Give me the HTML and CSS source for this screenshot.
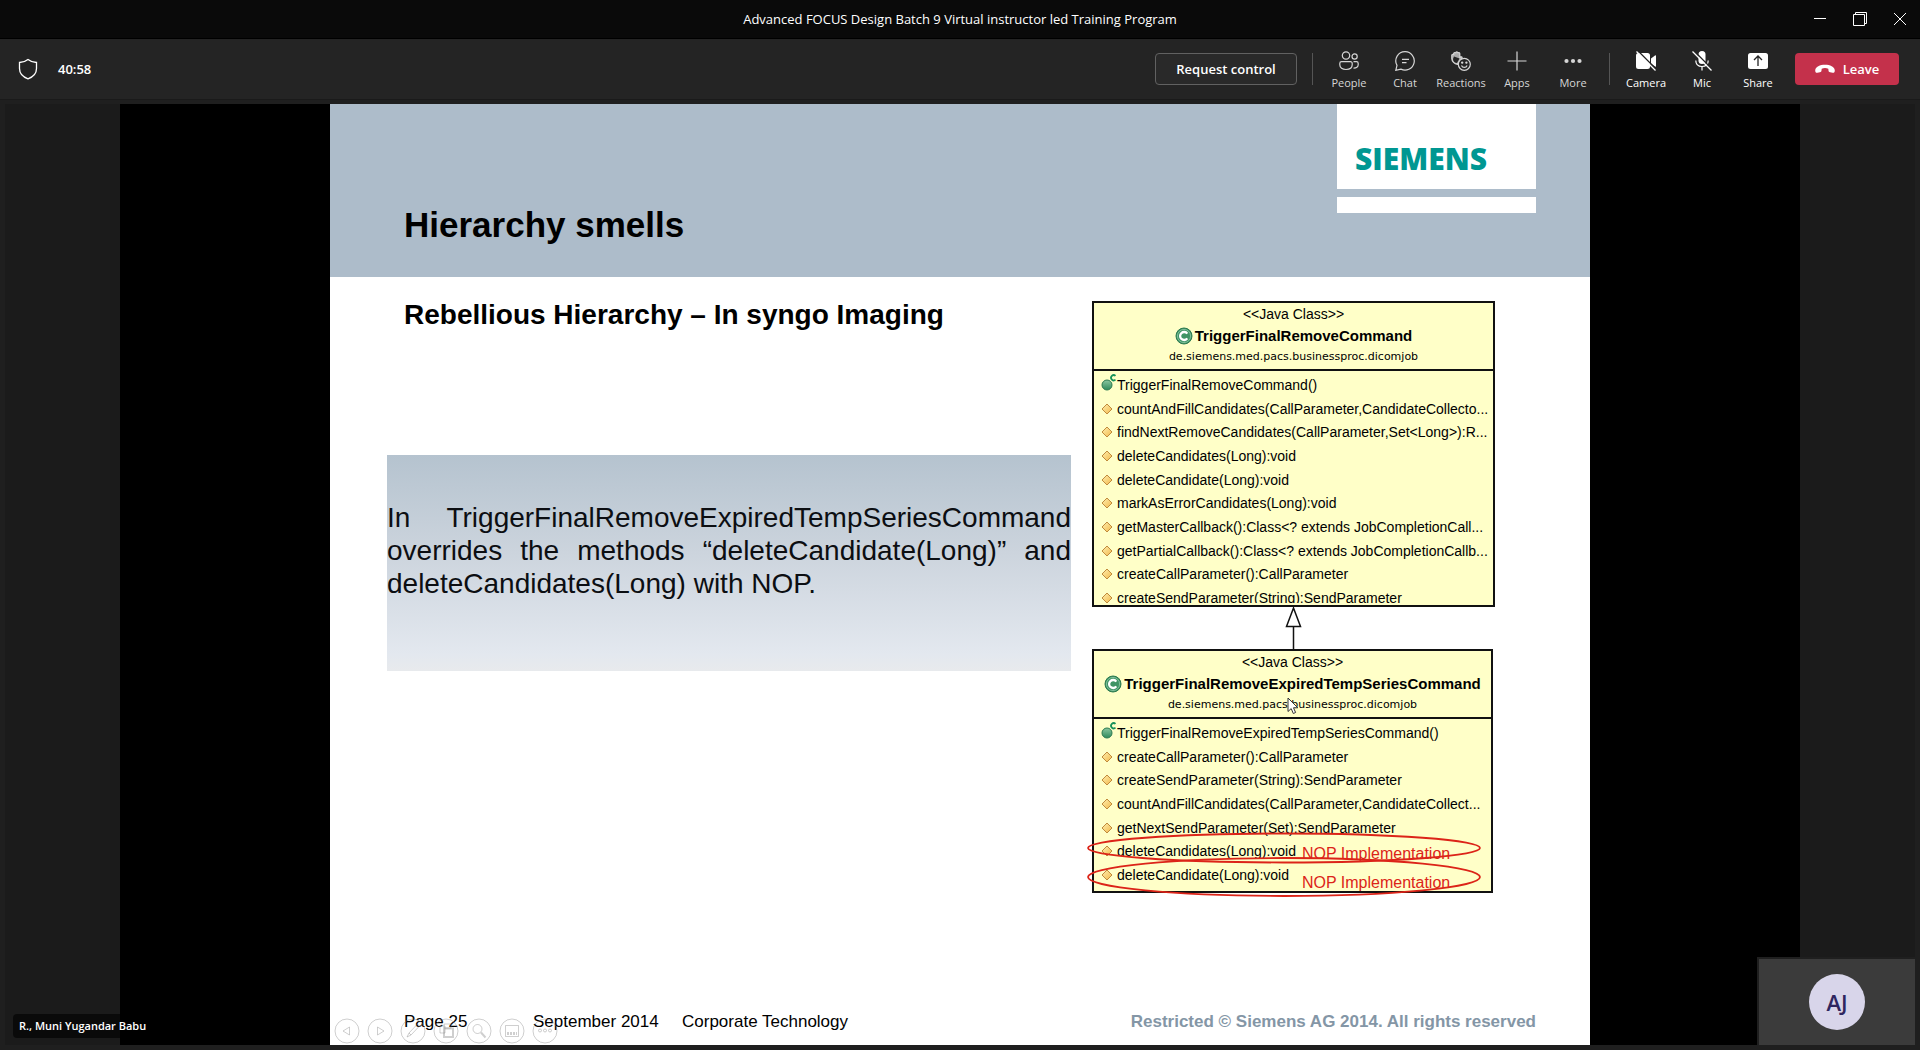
FILE: index.html
```html
<!DOCTYPE html>
<html lang="en">
<head>
<meta charset="utf-8">
<meta name="viewport" content="width=device-width, initial-scale=1">
<title>Advanced FOCUS Design Batch 9 Virtual instructor led Training Program</title>
<link rel="stylesheet" href="styles.css">
</head>
<body>
<svg class="defs" width="0" height="0" aria-hidden="true">
  <defs>
    <linearGradient id="gold" x1="0" y1="0" x2="1" y2="1"><stop offset="0" stop-color="#fff0b0"/><stop offset="1" stop-color="#f2b84a"/></linearGradient>
    <linearGradient id="green" x1="0" y1="0" x2="0" y2="1"><stop offset="0" stop-color="#8cc7a0"/><stop offset="1" stop-color="#2f8a5b"/></linearGradient>
    <symbol id="protected" viewBox="0 0 12 12"><path d="M6 1l5 5-5 5-5-5z" fill="url(#gold)" stroke="#c08a3c"/></symbol>
    <symbol id="constructor" viewBox="0 0 16 18"><circle cx="6" cy="12" r="5" fill="url(#green)" stroke="#2c7a50"/><path d="M14.500 2.800a2.600 2.600 0 1 0 0 3.800" fill="none" stroke="#16925a" stroke-width="1.800"/></symbol>
    <symbol id="class" viewBox="0 0 18 18"><circle cx="9" cy="9" r="8" fill="#3f9465" stroke="#2c7a50"/><circle cx="9" cy="9" r="6.600" fill="none" stroke="#8fc9a6" stroke-width=".8"/><path d="M12.300 6.600a4 4 0 1 0 0 4.800" fill="none" stroke="#fff" stroke-width="2.300"/></symbol>
  </defs>
</svg>

<header class="titlebar">
  <h1 class="titlebar-text">Advanced FOCUS Design Batch 9 Virtual instructor led Training Program</h1>
  <div class="window-buttons">
    <button class="window-button" aria-label="Minimize"><svg width="14" height="14" viewBox="0 0 14 14"><path d="M1 6.500h12"/></svg></button>
    <button class="window-button" aria-label="Restore"><svg width="14" height="14" viewBox="0 0 14 14"><path d="M.5 2.500h11v11H.5zM2.500 2.500V.5h11v11h-2"/></svg></button>
    <button class="window-button" aria-label="Close"><svg width="14" height="14" viewBox="0 0 14 14"><path d="M1 1l12 12M13 1L1 13"/></svg></button>
  </div>
</header>

<nav class="toolbar" aria-label="Meeting controls">
  <div class="status">
    <svg width="20" height="22" viewBox="0 0 20 22" fill="none" stroke="#fff" stroke-width="1.300"><path d="M10 1.500C7.500 3.500 4.500 4.500 1.500 4.500v6c0 5 3.500 8.500 8.500 10.300 5-1.800 8.500-5.300 8.500-10.300v-6c-3 0-6-1-8.500-3z"/></svg>
    <span>40:58</span>
  </div>
  <button class="request">Request control</button>
  <span class="divider"></span>
  <button class="tool">
    <svg width="20" height="20" viewBox="0 0 20 20" fill="none" stroke="currentColor" stroke-width="1.200"><circle cx="7" cy="4.500" r="3.700"/><circle cx="15.600" cy="5.500" r="2.600"/><path d="M2.500 10.700h9a1.700 1.700 0 0 1 1.700 1.700v1.400c0 3-2.600 4.700-6.200 4.700S.8 16.800.8 13.800v-1.400a1.700 1.700 0 0 1 1.700-1.700zM14.500 10.700h3a1.700 1.700 0 0 1 1.700 1.700v1c0 2.600-1.900 3.900-4.700 3.800"/></svg>
    People</button>
  <button class="tool">
    <svg width="20" height="20" viewBox="0 0 20 20" fill="none" stroke="currentColor" stroke-width="1.200"><path d="M10.200.7a9.200 9.200 0 1 1-4.300 17.400L.8 19.300 2 14.400A9.200 9.200 0 0 1 10.200.7zM7 8.300h7M7 11.700h4.500"/></svg>
    Chat</button>
  <button class="tool">
    <svg width="20" height="20" viewBox="0 0 20 20" fill="none" stroke="currentColor" stroke-width="1.200"><path d="M6.500 13.300C3.500 13 .8 10.500.8 7.500V4.200c0-1.300 1.700-1.300 1.900 0V2.500c.1-1.300 1.800-1.300 2-.1.100-2 2-2 2.200-.1.300-1.200 1.800-1 1.900.3v4l1-.7c.8-.4 1.600.3 1.200 1z" fill="#aaa"/><path d="M2 8c0 2.500 2 4 4 4l2.500-4.500-5.500-2z" fill="#242424" stroke="none"/><circle cx="13.300" cy="13.300" r="6" fill="#242424"/><path d="M10.500 14.500c1 2.500 4.600 2.500 5.600 0"/><circle cx="11.200" cy="11.600" r=".6" fill="currentColor"/><circle cx="15.400" cy="11.600" r=".6" fill="currentColor"/></svg>
    Reactions</button>
  <button class="tool">
    <svg width="20" height="20" viewBox="0 0 20 20" fill="none" stroke="currentColor" stroke-width="1.200"><path d="M10 .5v19M.5 10h19"/></svg>
    Apps</button>
  <button class="tool">
    <svg width="20" height="20" viewBox="0 0 20 20" fill="currentColor"><circle cx="3.500" cy="10" r="2.100"/><circle cx="10" cy="10" r="2.100"/><circle cx="16.500" cy="10" r="2.100"/></svg>
    More</button>
  <span class="divider"></span>
  <button class="tool tool-device">
    <svg width="20" height="20" viewBox="0 0 20 20"><path d="M2.500 2h9A2.500 2.500 0 0 1 14 4.500v11a2.500 2.500 0 0 1-2.500 2.500h-9A2.500 2.500 0 0 1 0 15.500v-11A2.500 2.500 0 0 1 2.500 2zM15 7.500l4-3c.5-.4 1-.1 1 .5v10c0 .6-.5.900-1 .5l-4-3z" fill="#fff"/><path d="M1.500-.5l19 19" stroke="#242424" stroke-width="1.500"/><path d="M.5.500l19 19" stroke="#fff" stroke-width="1.300"/></svg>
    Camera</button>
  <button class="tool tool-device">
    <svg width="20" height="20" viewBox="0 0 20 20"><rect x="6.500" y="0" width="7" height="13" rx="3.500" fill="#fff"/><path d="M3.800 9.500c0 4 2.700 6 6.200 6s6.200-2 6.200-6M10 15.500V19.500" fill="none" stroke="#fff" stroke-width="1.200"/><path d="M1.500-.5l19 19" stroke="#242424" stroke-width="1.500"/><path d="M.5.500l19 19" stroke="#fff" stroke-width="1.300"/></svg>
    Mic</button>
  <button class="tool tool-device">
    <svg width="20" height="20" viewBox="0 0 20 20"><rect x="0" y="2" width="20" height="16" rx="2.500" fill="#fff"/><path d="M10 15V5.500M6 9l4-4 4 4" fill="none" stroke="#242424" stroke-width="1.300"/></svg>
    Share</button>
  <button class="leave">
    <svg width="20" height="10" viewBox="0 0 20 10"><path d="M10 .8c5 0 9.600 2 9.800 5.600 0 1.800-.8 2.700-2.200 2.400l-2.500-.5c-1-.2-1.500-.8-1.600-1.800l-.2-1.800c-2-.8-4.600-.8-6.600 0l-.2 1.800c-.1 1-.6 1.600-1.600 1.800l-2.500.5C1 9.100.2 8.200.2 6.400.4 2.800 5 .8 10 .8z" fill="#fff"/></svg>
    Leave</button>
</nav>

<main class="stage">
  <div class="screen">
    <article class="slide">
      <header class="slide-header">
        <h2 class="slide-title">Hierarchy smells</h2>
        <div class="logo">
          <div class="logo-name">SIEMENS</div>
          <div class="logo-bar"></div>
        </div>
      </header>
      <div class="slide-body">
        <div class="slide-text">
          <h3 class="subtitle">Rebellious Hierarchy – In syngo Imaging</h3>
          <p class="callout">In TriggerFinalRemoveExpiredTempSeriesCommand overrides the methods “deleteCandidate(Long)” and deleteCandidates(Long) with NOP.</p>
        </div>
        <div class="diagram">
          <section class="uml uml-parent">
            <header class="uml-head">
              <div>&lt;&lt;Java Class&gt;&gt;</div>
              <h4 class="uml-name"><svg width="18" height="18"><use href="#class"/></svg>TriggerFinalRemoveCommand</h4>
              <div class="uml-package">de.siemens.med.pacs.businessproc.dicomjob</div>
            </header>
            <ul class="members">
              <li><svg class="ctor" width="16" height="18"><use href="#constructor"/></svg>TriggerFinalRemoveCommand()</li>
              <li><svg width="12" height="12"><use href="#protected"/></svg>countAndFillCandidates(CallParameter,CandidateCollecto...</li>
              <li><svg width="12" height="12"><use href="#protected"/></svg>findNextRemoveCandidates(CallParameter,Set&lt;Long&gt;):R...</li>
              <li><svg width="12" height="12"><use href="#protected"/></svg>deleteCandidates(Long):void</li>
              <li><svg width="12" height="12"><use href="#protected"/></svg>deleteCandidate(Long):void</li>
              <li><svg width="12" height="12"><use href="#protected"/></svg>markAsErrorCandidates(Long):void</li>
              <li><svg width="12" height="12"><use href="#protected"/></svg>getMasterCallback():Class&lt;? extends JobCompletionCall...</li>
              <li><svg width="12" height="12"><use href="#protected"/></svg>getPartialCallback():Class&lt;? extends JobCompletionCallb...</li>
              <li><svg width="12" height="12"><use href="#protected"/></svg>createCallParameter():CallParameter</li>
              <li><svg width="12" height="12"><use href="#protected"/></svg>createSendParameter(String):SendParameter</li>
            </ul>
          </section>
          <svg class="inherits" width="403" height="42" viewBox="0 0 403 42" fill="#fff" stroke="#111" stroke-width="1.500"><path d="M201.500 1l-7 18.500h14zM201.500 19.500V42"/></svg>
          <section class="uml uml-child">
            <header class="uml-head">
              <div>&lt;&lt;Java Class&gt;&gt;</div>
              <h4 class="uml-name"><svg width="18" height="18"><use href="#class"/></svg>TriggerFinalRemoveExpiredTempSeriesCommand</h4>
              <div class="uml-package">de.siemens.med.pacs.businessproc.dicomjob</div>
            </header>
            <ul class="members">
              <li><svg class="ctor" width="16" height="18"><use href="#constructor"/></svg>TriggerFinalRemoveExpiredTempSeriesCommand()</li>
              <li><svg width="12" height="12"><use href="#protected"/></svg>createCallParameter():CallParameter</li>
              <li><svg width="12" height="12"><use href="#protected"/></svg>createSendParameter(String):SendParameter</li>
              <li><svg width="12" height="12"><use href="#protected"/></svg>countAndFillCandidates(CallParameter,CandidateCollect...</li>
              <li><svg width="12" height="12"><use href="#protected"/></svg>getNextSendParameter(Set):SendParameter</li>
              <li><svg width="12" height="12"><use href="#protected"/></svg>deleteCandidates(Long):void</li>
              <li><svg width="12" height="12"><use href="#protected"/></svg>deleteCandidate(Long):void</li>
            </ul>
            <svg class="marks" width="396" height="68" viewBox="0 0 396 68">
              <g fill="none" stroke="#dc2418" stroke-width="1.800"><ellipse cx="198" cy="17" rx="196" ry="14.500"/><ellipse cx="198" cy="46" rx="196" ry="19"/></g>
              <text x="216" y="28">NOP Implementation</text>
              <text x="216" y="57">NOP Implementation</text>
            </svg>
            <svg class="cursor" width="12" height="18" viewBox="0 0 12 18"><path d="M1 1v13.500l3.200-2.900 2.100 4.900 2.300-1-2.100-4.700h4.300z" fill="#fff" stroke="#333"/></svg>
          </section>
        </div>
      </div>
      <footer class="slide-footer">
        <span class="page-number">Page 25</span>
        <span class="date">September 2014</span>
        <span>Corporate Technology</span>
        <span class="rights">Restricted © Siemens AG 2014. All rights reserved</span>
      </footer>
      <div class="show-controls">
        <button aria-label="Previous slide"><svg viewBox="0 0 26 26"><circle cx="13" cy="13" r="12"/><path d="M15.500 9v8L9 13z"/></svg></button>
        <button aria-label="Next slide"><svg viewBox="0 0 26 26"><circle cx="13" cy="13" r="12"/><path d="M10.500 9v8l6.500-4z"/></svg></button>
        <button aria-label="Pen"><svg viewBox="0 0 26 26"><circle cx="13" cy="13" r="12"/><path d="M7 19l2-4 8.500-9 2 2-8.500 9zM9 15l2 2"/></svg></button>
        <button aria-label="All slides"><svg viewBox="0 0 26 26"><circle cx="13" cy="13" r="12"/><path d="M7 8h5v7H7zM11 6h7v4h-7z"/><path d="M11 10.500h9v8.500h-9z" stroke-width="2"/></svg></button>
        <button aria-label="Zoom"><svg viewBox="0 0 26 26"><circle cx="13" cy="13" r="12"/><circle cx="11.500" cy="11" r="4.500"/><path d="M15 14.500l4.500 5" stroke-width="2"/></svg></button>
        <button aria-label="Subtitles"><svg viewBox="0 0 26 26"><circle cx="13" cy="13" r="12"/><path d="M6.500 7.500h13v11h-13z"/><path d="M8 15.500h10" stroke-width="3" stroke-dasharray="2 1"/></svg></button>
        <button aria-label="More options"><svg viewBox="0 0 26 26"><circle cx="13" cy="13" r="12"/><circle cx="8" cy="12.500" r="1.500"/><circle cx="13" cy="12.500" r="1.500"/><circle cx="18" cy="12.500" r="1.500"/></svg></button>
      </div>
    </article>
  </div>
  <div class="presenter">R., Muni Yugandar Babu</div>
  <div class="self-view"><span class="avatar">AJ</span></div>
</main>
</body>
</html>
```
FILE: styles.css
```css
* { box-sizing: border-box; }

body {
  margin: 0;
  min-height: 100vh;
  display: flex;
  flex-direction: column;
  background: #1f1f1f;
  color: #fff;
  font: 13px/16px "Open Sans", "Noto Sans", sans-serif;
}

h1, h2, h3, h4, p, ul { margin: 0; padding: 0; font-size: inherit; }
button { border: 0; padding: 0; background: none; color: inherit; font: inherit; }
svg { display: block; flex: none; }
.defs { position: absolute; }

/* Window title */
.titlebar {
  display: grid;
  grid-template-columns: 1fr auto 1fr;
  align-items: center;
  height: 39px;
  background: #0a0a0a;
  border-bottom: 1px solid #000;
}
.titlebar-text { grid-column: 2; font-weight: 400; }
.window-buttons { display: flex; justify-content: flex-end; gap: 26px; padding-right: 13px; }
.window-button svg { fill: none; stroke: #fff; stroke-width: 1; }

/* Meeting toolbar */
.toolbar {
  display: flex;
  align-items: center;
  height: 60px;
  padding: 0 21px 0 18px;
  background: #242424;
  box-shadow: 0 1px #1a1a1a;
}
.status { display: flex; align-items: center; gap: 20px; margin-right: auto; font-weight: 600; }
.request {
  width: 142px;
  height: 32px;
  border: 1px solid #616161;
  border-radius: 4px;
  background: #292929;
  font-weight: 600;
}
.divider { width: 1px; height: 32px; margin: 0 8px; background: #555; }
.request + .divider { margin-left: 15px; }
.tool {
  width: 56px;
  height: 60px;
  padding-top: 12px;
  display: flex;
  flex-direction: column;
  align-items: center;
  justify-content: flex-start;
  gap: 4px;
  color: #d6d6d6;
  font-size: 11px;
  line-height: 16px;
}
.tool-device { color: #fff; }
.leave {
  display: flex;
  align-items: center;
  justify-content: center;
  gap: 8px;
  width: 104px;
  height: 32px;
  margin-left: 9px;
  border-radius: 4px;
  background: #c4314b;
  font-weight: 600;
}

/* Shared screen */
.stage {
  position: relative;
  flex: 1;
  display: flex;
  justify-content: center;
  margin: 5px;
  background: #1b1b1b;
}
.screen {
  flex: 0 1 1680px;
  display: flex;
  justify-content: center;
  background: #000;
}
.slide {
  position: relative;
  flex: 0 1 1260px;
  display: flex;
  flex-direction: column;
  background: #fff;
  color: #000;
  font-family: "Liberation Sans", Arial, sans-serif;
}
.slide-header {
  display: flex;
  justify-content: space-between;
  align-items: flex-end;
  height: 173px;
  padding: 0 54px 32px 74px;
  background: #adbcca;
}
.slide-title { font-size: 35px; line-height: 40px; }
.logo { align-self: flex-start; width: 199px; }
.logo-name {
  height: 85px;
  padding: 40px 0 0 18px;
  background: #fff;
  color: #009792;
  font: 800 30px/30px "Open Sans", sans-serif;
}
.logo-bar { height: 16px; margin-top: 8px; background: #fff; }

.slide-body {
  display: grid;
  grid-template-columns: minmax(0, 1fr) 403px;
  column-gap: 21px;
  padding: 22px 95px 0 57px;
}
.subtitle { padding-left: 17px; font-size: 28px; line-height: 32px; }
.callout {
  margin-top: 124px;
  padding: 46px 0 71px;
  background: linear-gradient(#b5c3cf, #ccd4dd 45%, #e3e8ef 92%, #e8eaed);
  color: #0c0e12;
  font-size: 28px;
  line-height: 33px;
  text-align: justify;
}

/* Class diagram */
.diagram { padding-top: 2px; font-size: 14px; line-height: 20px; }
.uml {
  position: relative;
  border: 2px solid #111;
  background: #ffffc8;
}
.uml-parent { height: 306px; }
.uml-child { width: 401px; height: 244px; }
.uml-head {
  display: flex;
  flex-direction: column;
  align-items: center;
  gap: 1px;
  padding: 1px 0 2px;
  border-bottom: 2px solid #111;
}
.uml-name {
  display: flex;
  align-items: center;
  gap: 2px;
  font-size: 15px;
  line-height: 21px;
}
.uml-package { font: 11px/20px "DejaVu Sans", sans-serif; }
.members {
  display: flex;
  flex-direction: column;
  height: 237px;
  padding: 0 0 0 7px;
  margin-top: 2px;
  list-style: none;
}
/* The parent box cuts its last member off above the border */
.uml-parent .members { clip-path: inset(0 0 7px); }
.uml-child .members { height: 166px; }
.members li {
  flex: 1;
  display: flex;
  align-items: center;
  gap: 4px;
  white-space: nowrap;
}
.members .ctor { margin: -6px -4px 0 0; }
.marks { position: absolute; left: -8px; top: 180px; }
.marks text { fill: #dc2418; font-size: 16px; }
.cursor { position: absolute; left: 193px; top: 46px; }

.slide-footer {
  display: flex;
  margin-top: auto;
  padding: 0 54px 13px 74px;
  font-size: 17px;
  line-height: 20px;
}
.page-number { width: 129px; }
.date { width: 149px; }
.rights { margin-left: auto; color: #8496a6; font-weight: 700; }

.show-controls {
  position: absolute;
  left: 4px;
  bottom: 1px;
  display: flex;
  gap: 7px;
}
.show-controls button { width: 26px; height: 26px; }
.show-controls svg { fill: none; stroke: #8886; stroke-width: 1; }

/* Participants */
.presenter {
  position: absolute;
  left: 8px;
  bottom: 7px;
  padding: 4px 6px;
  border-radius: 4px;
  background: #0009;
  font-size: 11px;
  font-weight: 600;
}
.self-view {
  position: absolute;
  right: 0;
  bottom: 0;
  display: grid;
  place-items: center;
  width: 158px;
  height: 88px;
  border: solid #1f1f1f;
  border-width: 2px 0 0 2px;
  background: #3b3b3b;
}
.avatar {
  width: 56px;
  height: 56px;
  border-radius: 50%;
  background: #d8d5ea;
  color: #2f2660;
  font-size: 22px;
  font-weight: 600;
  line-height: 56px;
  text-align: center;
}
```
